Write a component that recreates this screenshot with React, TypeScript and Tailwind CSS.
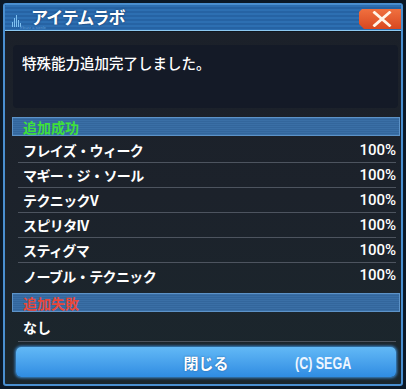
import React from 'react';

const successRows = [
  { name: 'フレイズ・ウィーク', rate: '100%' },
  { name: 'マギー・ジ・ソール', rate: '100%' },
  { name: 'テクニックV', rate: '100%' },
  { name: 'スピリタIV', rate: '100%' },
  { name: 'スティグマ', rate: '100%' },
  { name: 'ノーブル・テクニック', rate: '100%' },
];

function TitleBar() {
  return (
    <div className="relative flex h-[26px] items-center border-b border-[#8cc8f0] bg-[image:repeating-linear-gradient(to_bottom,#2d6fb2_0px,#2d6fb2_2px,#2663a4_2px,#2663a4_4px)]">
      <div className="ml-[7px] mb-[3px] flex h-[12px] items-end gap-[1px] self-end">
        <span className="h-[5px] w-[1px] bg-[#7fc0f0]" />
        <span className="h-[9px] w-[1px] bg-[#7fc0f0]" />
        <span className="h-[12px] w-[1px] bg-[#7fc0f0]" />
        <span className="h-[7px] w-[1px] bg-[#7fc0f0]" />
        <span className="h-[4px] w-[1px] bg-[#7fc0f0]" />
      </div>
      <span className="absolute bottom-0 left-[15px] font-['Liberation_Sans',sans-serif] text-[4px] leading-none text-[#5b9ad6]">
        Ebuzz a sienle
      </span>
      <span className="ml-[10px] mb-[2px] text-[17px] font-bold leading-none tracking-[-1px] text-white [text-shadow:0_0_2px_#0b2f5a]">
        アイテムラボ
      </span>
      <button
        type="button"
        className="ml-auto mr-[-3px] mt-[3px] flex h-[20px] w-[45px] items-center justify-center bg-gradient-to-b from-[#f0703f] to-[#d8471f] [clip-path:polygon(3px_0,100%_0,100%_100%,5px_100%,0_calc(100%-5px),0_3px)]"
      >
        <svg width="20" height="16" viewBox="0 0 20 16">
          <path d="M2.5 1.5 L17.5 14.5 M17.5 1.5 L2.5 14.5" stroke="#fff4e8" strokeWidth="2.8" strokeLinecap="square" />
        </svg>
      </button>
    </div>
  );
}

function SectionHeader({ label, color }: { label: string; color: string }) {
  return (
    <div className="ml-[7px] mr-[1px] flex h-[19px] items-center border border-[#5d93c8] bg-[image:repeating-linear-gradient(to_bottom,#3a6fa6_0px,#3a6fa6_1px,#33669c_1px,#33669c_2px)] pl-[10px]">
      <span className={`text-[14px] font-bold leading-none ${color}`}>{label}</span>
    </div>
  );
}

export default function App() {
  return (
    <div className="h-[389px] w-[406px] bg-[#0b1826] p-[3px] font-['Noto_Sans_CJK_JP',sans-serif]">
      <div className="flex h-full flex-col overflow-hidden rounded-[3px] border-2 border-[#4a8fd0] bg-gradient-to-b from-[#1b2029] via-[#1c222b] to-[#1b272d]">
        <TitleBar />
        <div className="h-[1px] bg-[#10151d]" />

        <div className="ml-[8px] mr-[3px] mt-[13px] h-[63px] rounded-[4px] bg-[#141a27] pl-[9px] pt-[8px]">
          <p className="text-[14.5px] font-medium leading-[20px] text-white">特殊能力追加完了しました。</p>
        </div>

        <div className="mt-[9px]">
          <SectionHeader label="追加成功" color="text-[#3ee03a]" />
        </div>

        <div className="ml-[13px] mr-[5px] mt-[2px] flex flex-col">
          {successRows.map((row, i) => (
            <div
              key={row.name}
              className={`flex h-[25px] items-center justify-between pl-[5px] ${
                i < successRows.length - 1 ? 'border-b border-[#4d545f]' : ''
              }`}
            >
              <span className="text-[14px] font-bold leading-none tracking-[-0.6px] text-white">{row.name}</span>
              <span className="font-['Roboto',sans-serif] text-[15px] font-medium leading-none text-white">{row.rate}</span>
            </div>
          ))}
        </div>

        <div className="mt-[5px]">
          <SectionHeader label="追加失敗" color="text-[#e8483a]" />
        </div>

        <div className="ml-[13px] mr-[5px] flex h-[30px] items-center border-b border-[#4d545f] pl-[5px]">
          <span className="text-[14px] font-bold leading-none text-white">なし</span>
        </div>

        <div className="relative ml-[11px] mr-[5px] mt-[5px] flex h-[30px] items-center justify-center rounded-[5px] bg-gradient-to-b from-[#62b9f6] to-[#2f8ce2] shadow-[0_0_3px_1px_#3c8ed8]">
          <span className="text-[15px] font-bold leading-none text-white [text-shadow:0_0_2px_#1a5a9a]">閉じる</span>
          <span className="absolute left-[279px] top-[9px] origin-left font-['Liberation_Sans_Narrow','Liberation_Sans',sans-serif] text-[16px] font-bold leading-none text-[#eef6ff] [transform:scaleX(0.78)]">
            (C) SEGA
          </span>
        </div>
      </div>
    </div>
  );
}
